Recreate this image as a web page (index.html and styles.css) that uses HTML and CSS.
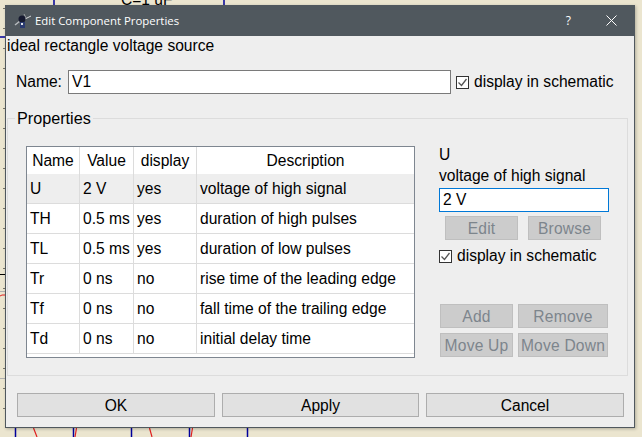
FILE: index.html
```html
<!DOCTYPE html>
<html lang="en">
<head>
  <meta charset="UTF-8">
  <title>Edit Component Properties</title>
  <link rel="stylesheet" href="styles.css">
</head>
<body>

  <!-- schematic behind the dialog -->
  <svg class="schematic" width="642" height="437" viewBox="0 0 642 437">
    <path d="M4 8v1M4 28v1M4 48v1M4 68v1M4 88v1M4 108v1M4 128v1M4 148v1M4 168v1M4 188v1M4 208v1M4 228v1M4 248v1M4 268v1M4 288v1M4 308v1M4 328v1M4 348v1M4 368v1M4 388v1M4 408v1" stroke="#000" fill="none"/>
    <path d="M0 274.500H5" stroke="#000" fill="none"/>
    <path d="M0 291.500H5M0 378.500H5" stroke="#b0b0b0" fill="none"/>
    <path d="M0 296L2 295H5" stroke="#e02020" fill="none"/>
    <g stroke="#00009c" stroke-width="1.5" fill="none">
      <path d="M54 0V5M224 0V5M0 37H5"/>
      <path d="M15.500 428V437M73.500 428V437M131.500 428V437M189.500 428V437M247.500 428V437"/>
    </g>
    <g stroke="#e02020" stroke-width="1.2" fill="none">
      <path d="M33.500 428L37 437M76.500 428L75 437M149.500 428L152 437M192.500 428L191 437"/>
    </g>
    <text x="121" y="5" class="schematic-label">C=1 uF</text>
  </svg>

  <div class="dialog">
    <div class="titlebar">
      <svg class="app-icon" width="18" height="16" viewBox="0 0 18 16">
        <path d="M1 12L6 8" stroke="#b8bcc0" stroke-width="1.5"/>
        <path d="M11 6L17 3" stroke="#d8dadc" stroke-width="1"/>
        <path d="M10 1L12 5" stroke="#a0a4a8" stroke-width="1"/>
        <circle cx="8" cy="6" r="3.5" fill="#161a30"/>
        <rect x="6" y="9" width="5" height="6" fill="#2a3a70"/>
        <rect x="7" y="10" width="2" height="2" fill="#e0e4e8"/>
      </svg>
      <span class="title">Edit Component Properties</span>
      <span class="help">?</span>
      <svg class="close" width="11" height="11" viewBox="0 0 11 11">
        <path d="M0.5 0.5L10.5 10.5M10.5 0.5L0.5 10.5" stroke="#fff" stroke-width="1"/>
      </svg>
    </div>

    <div class="content">
      <div class="description">ideal rectangle voltage source</div>

      <div class="name-row">
        <label for="nome">Name:</label>
        <input type="text" id="nome" class="name-input" value="V1">
        <span class="check"><span class="box"><svg width="11" height="11" viewBox="0 0 11 11"><path d="M1.500 5.500L4.500 8.500L9.500 2" stroke="#555" stroke-width="1.300" fill="none"/></svg></span>display in schematic</span>
      </div>

      <fieldset class="props">
        <legend>Properties</legend>
        <div class="props-inner">
          <div class="table-wrap">
            <table>
              <thead>
                <tr><th class="c-name">Name</th><th class="c-value">Value</th><th class="c-display">display</th><th>Description</th></tr>
              </thead>
              <tbody>
                <tr class="selected"><td>U</td><td>2 V</td><td>yes</td><td>voltage of high signal</td></tr>
                <tr><td>TH</td><td>0.5 ms</td><td>yes</td><td>duration of high pulses</td></tr>
                <tr><td>TL</td><td>0.5 ms</td><td>yes</td><td>duration of low pulses</td></tr>
                <tr><td>Tr</td><td>0 ns</td><td>no</td><td>rise time of the leading edge</td></tr>
                <tr><td>Tf</td><td>0 ns</td><td>no</td><td>fall time of the trailing edge</td></tr>
                <tr><td>Td</td><td>0 ns</td><td>no</td><td>initial delay time</td></tr>
              </tbody>
            </table>
          </div>

          <div class="side">
            <div class="side-name">U</div>
            <div class="side-desc">voltage of high signal</div>
            <input type="text" class="value-input" value="2 V">
            <div class="side-buttons">
              <button class="btn-off btn-edit">Edit</button>
              <button class="btn-off btn-edit">Browse</button>
            </div>
            <span class="check side-check"><span class="box"><svg width="11" height="11" viewBox="0 0 11 11"><path d="M1.500 5.500L4.500 8.500L9.500 2" stroke="#555" stroke-width="1.300" fill="none"/></svg></span>display in schematic</span>
            <div class="side-actions">
              <button class="btn-off">Add</button>
              <button class="btn-off">Remove</button>
              <button class="btn-off">Move Up</button>
              <button class="btn-off">Move Down</button>
            </div>
          </div>
        </div>
      </fieldset>

      <div class="footer">
        <button>OK</button>
        <button>Apply</button>
        <button>Cancel</button>
      </div>
    </div>
  </div>

</body>
</html>
```

FILE: styles.css
```css
* {
  box-sizing: border-box;
}

html, body {
  margin: 0;
  height: 437px;
  overflow: hidden;
}

body {
  position: relative;
  font-family: "Liberation Sans", Arial, sans-serif;
  font-size: 15.6px;
  color: #000;
  background-color: #ebe5cf;
}

.schematic {
  position: absolute;
  left: 0;
  top: 0;
}

.schematic-label {
  font-family: "Liberation Sans", Arial, sans-serif;
  font-size: 15.6px;
  fill: #000;
}

.dialog {
  position: absolute;
  left: 5px;
  top: 5px;
  width: 630px;
  height: 423px;
  background-color: #eeeeee;
  border: 1px solid #50585e;
  border-top: none;
  box-shadow: 1px 1px 3px rgba(0, 0, 0, 0.25);
  display: flex;
  flex-direction: column;
}

.titlebar {
  height: 31px;
  flex: none;
  margin: 0 -1px;
  background-color: #50585e;
  color: #fff;
  display: flex;
  align-items: center;
  padding-left: 9px;
}

.app-icon {
  margin-right: 3px;
}

.title {
  font-family: "Open Sans", "Noto Sans", sans-serif;
  font-size: 11.4px;
  flex: 1;
}

.help {
  font-family: "Open Sans", "Noto Sans", sans-serif;
  font-size: 12px;
  margin-right: 35px;
}

.close {
  margin-right: 18px;
}

.content {
  flex: 1;
  display: flex;
  flex-direction: column;
  padding: 0 0 0 1px;
}

.description {
  height: 20px;
  line-height: 20px;
}

.name-row {
  display: flex;
  align-items: center;
  margin: 14px 0 0 9px;
  height: 24px;
}

.name-row label {
  width: 52px;
}

input {
  font-family: inherit;
  font-size: 15.6px;
  margin: 0;
  border-radius: 0;
  outline: none;
  background-color: #fff;
}

.name-input {
  width: 383px;
  height: 24px;
  border: 1px solid #7a7a7a;
  padding: 0 3px;
}

.check {
  display: flex;
  align-items: center;
}

.box {
  width: 13px;
  height: 13px;
  border: 1px solid #333;
  background-color: #fff;
  margin-right: 5px;
  display: flex;
}

.name-row .check {
  margin-left: 5px;
}

.props {
  margin: 16px 0 0 0;
  padding: 0;
  width: 621px;
  height: 266px;
  border: 1px solid #dcdcdc;
  min-width: 0;
}

.props legend {
  padding: 0 2px;
  margin-left: 7px;
  font-size: 16.2px;
  line-height: 17px;
}

.props-inner {
  display: flex;
  padding: 19px 0 0 18px;
}

.table-wrap {
  width: 389px;
  height: 212px;
  border: 1px solid #7e8690;
  background-color: #fff;
  overflow: hidden;
}

table {
  border-collapse: separate;
  border-spacing: 0;
  width: 100%;
  table-layout: fixed;
}

th {
  font-weight: normal;
  height: 27px;
  border-right: 1px solid #dcdcdc;
  padding: 0;
  text-align: center;
}

td {
  height: 30px;
  padding: 0 0 0 3px;
  border-right: 1px solid #dcdcdc;
  border-bottom: 1px solid #dcdcdc;
  white-space: nowrap;
}

th:last-child, td:last-child {
  border-right: none;
}

.c-name {
  width: 53px;
}

.c-value {
  width: 54px;
}

.c-display {
  width: 63px;
}

.selected td {
  background-color: #eeeeee;
}

.side {
  margin-left: 24px;
  width: 170px;
  display: flex;
  flex-direction: column;
}

.side-name {
  line-height: 17px;
}

.side-desc {
  line-height: 17px;
  margin-top: 4px;
}

.value-input {
  width: 170px;
  height: 24px;
  margin-top: 4px;
  border: 1px solid #0078d7;
  padding: 0 3px;
}

.side-buttons {
  display: flex;
  gap: 10px;
  margin: 4px 0 0 6px;
}

button {
  font-family: inherit;
  font-size: 15.6px;
  margin: 0;
  padding: 1px 0 0;
  height: 24px;
  color: #000;
  background-color: #e1e1e1;
  border: 1px solid #adadad;
  border-radius: 0;
}

.btn-off {
  color: #7d858c;
  background-color: #cccccc;
  border-color: #bfbfbf;
  letter-spacing: 0.2px;
}

.btn-edit {
  width: 73px;
}

.side-check {
  margin-top: 7px;
  height: 18px;
}

.side-actions {
  display: grid;
  grid-template-columns: 73px 90px;
  gap: 5px;
  margin-top: 39px;
  margin-left: 1px;
}

.footer {
  display: grid;
  grid-template-columns: 198px 197px 198px;
  gap: 7px;
  margin: 17px 0 0 10px;
}
```
